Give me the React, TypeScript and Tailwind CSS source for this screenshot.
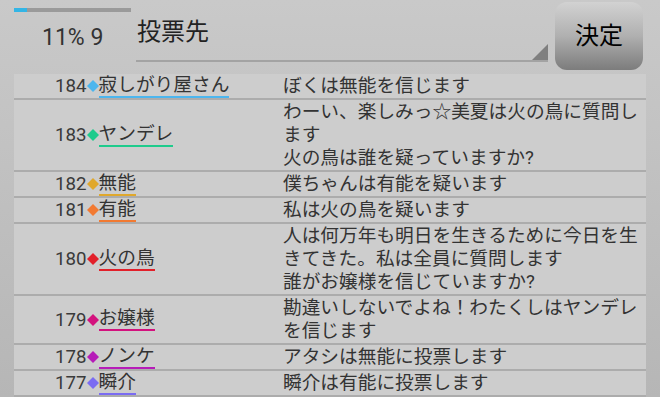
const font = "font-['Roboto','Noto_Sans_CJK_JP',sans-serif]";

type Log = {
  no: number;
  name: string;
  color: string;
  text: string;
};

const logs: Log[] = [
  { no: 184, name: "寂しがり屋さん", color: "#4cb6ee", text: "ぼくは無能を信じます" },
  {
    no: 183,
    name: "ヤンデレ",
    color: "#1fcb8c",
    text: "わーい、楽しみっ☆美夏は火の鳥に質問します\n火の鳥は誰を疑っていますか?",
  },
  { no: 182, name: "無能", color: "#e0a82c", text: "僕ちゃんは有能を疑います" },
  { no: 181, name: "有能", color: "#f27a32", text: "私は火の鳥を疑います" },
  {
    no: 180,
    name: "火の鳥",
    color: "#e2202a",
    text: "人は何万年も明日を生きるために今日を生きてきた。私は全員に質問します\n誰がお嬢様を信じていますか?",
  },
  {
    no: 179,
    name: "お嬢様",
    color: "#d3127e",
    text: "勘違いしないでよね！わたくしはヤンデレを信じます",
  },
  { no: 178, name: "ノンケ", color: "#b61cb8", text: "アタシは無能に投票します" },
  { no: 177, name: "瞬介", color: "#7b6cf2", text: "瞬介は有能に投票します" },
];

function Diamond({ color }: { color: string }) {
  return (
    <svg width="12" height="12" viewBox="0 0 12 12" className="shrink-0">
      <polygon points="6,0 12,6 6,12 0,6" fill={color} />
    </svg>
  );
}

function LogRow({ log }: { log: Log }) {
  return (
    <div className="flex bg-[#cdcdcd] border-b-2 border-[#acacac]">
      <div className="w-[269px] shrink-0 flex items-center pl-[41px] min-h-[24px]">
        <span className="text-[#3a3a3a] leading-[20px]">{log.no}</span>
        <Diamond color={log.color} />
        <span
          className="inline-block leading-[21px] border-b-2 text-[#333]"
          style={{ borderColor: log.color }}
        >
          {log.name}
        </span>
      </div>
      <div className="w-[363px] leading-[23px] text-[#333] whitespace-pre-line py-[0.5px]">
        {log.text}
      </div>
    </div>
  );
}

export default function App() {
  return (
    <div
      className={`w-[660px] h-[397px] overflow-hidden flex flex-col bg-gradient-to-b from-[#c9c9c9] to-[#b6b6b6] ${font}`}
    >
      {/* Header */}
      <div className="h-[74px] shrink-0 flex pl-[14px] pr-[17px]">
        <div className="w-[117px] shrink-0 flex flex-col">
          <div className="mt-[8px] h-[4px] bg-[#9a9a9a] flex">
            <div className="w-[13px] bg-[#33b5e5]" />
          </div>
          <div className="mt-[14px] pl-[28px] text-[23px] leading-[24px] text-[#333]">
            11% 9
          </div>
        </div>

        <div className="relative ml-[5px] w-[412px] h-[62px] border-b-2 border-[#a3a3a3]">
          <div className="pt-[18px] pl-[1px] text-[24px] leading-[28px] text-[#222]">
            投票先
          </div>
          <div className="absolute right-0 bottom-0 w-[16px] h-[16px] bg-[#7f7f7f] [clip-path:polygon(100%_0,100%_100%,0_100%)]" />
        </div>

        <button className="ml-[7px] mt-[2px] w-[88px] h-[68px] rounded-[12px] bg-gradient-to-b from-[#d2d2d2] via-[#b0b0b0] to-[#7c7c7c] text-[24px] text-black flex items-center justify-center">
          決定
        </button>
      </div>

      {/* Logs */}
      <div className="ml-[14px] w-[632px] text-[18.7px]">
        {logs.map((log) => (
          <LogRow key={log.no} log={log} />
        ))}
      </div>
    </div>
  );
}
